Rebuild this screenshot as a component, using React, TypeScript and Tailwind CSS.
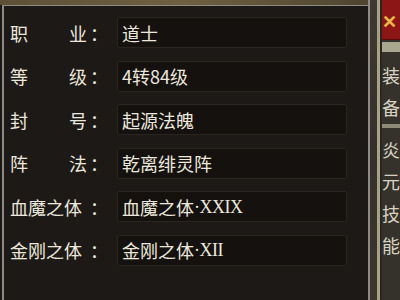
import React from 'react';

const rows = [
  { label: ['职', '业'], value: '道士', suffix: '' },
  { label: ['等', '级'], value: '4转84级', suffix: '' },
  { label: ['封', '号'], value: '起源法魄', suffix: '' },
  { label: ['阵', '法'], value: '乾离绯灵阵', suffix: '' },
  { label: ['血魔之体'], value: '血魔之体', suffix: '·XXIX' },
  { label: ['金刚之体'], value: '金刚之体', suffix: '·XII' },
];

export default function App() {
  return (
    <div
      className="flex w-[400px] h-[300px] overflow-hidden bg-[#1e1a16] text-[#ece7dd]"
      style={{ fontFamily: '"Noto Sans CJK SC", "Noto Sans", sans-serif' }}
    >
      {/* Left info panel */}
      <div className="flex flex-col w-[368px] shrink-0 bg-[#1c1815]">
        {/* Top textured strip */}
        <div className="h-[5px] bg-gradient-to-r from-[#5e5036] via-[#6e6040] to-[#4f4530]" />
        <div className="flex-1 ml-[2px] border-l-2 border-t-[1.5px] border-[#8f8b84] bg-[#1d1916] pl-[6px] pt-[11px]">
          <div className="flex flex-col gap-[12.5px]">
            {rows.map((row, i) => (
              <div key={i} className="flex items-center h-[31px]">
                <div className="w-[77px] flex justify-between text-[18px] leading-none">
                  {row.label.map((c, j) => (
                    <span key={j}>{c}</span>
                  ))}
                </div>
                <span className="ml-[3px] w-[18px] text-[18px] leading-none">：</span>
                <div className="ml-[9px] w-[230px] h-[31px] flex items-center pl-[4px] bg-[#14110e] border border-[#2b2520] rounded-[2px] text-[18px] leading-none">
                  {row.value}
                  {row.suffix && (
                    <span className="font-['Liberation_Serif',serif] text-[18px] tracking-[-0.5px]">
                      {row.suffix}
                    </span>
                  )}
                </div>
              </div>
            ))}
          </div>
        </div>
      </div>

      {/* Right frame edge */}
      <div className="w-[3px] bg-[#8f8b84]" />
      <div className="w-[10px] bg-gradient-to-b from-[#3c3832] via-[#34302b] to-[#3a362f]" />
      <div className="w-[5px] bg-[#a9a184]" />
      <div className="w-[3px] bg-[#2a2723]" />

      {/* Neighbouring panel sliver */}
      <div className="flex-1 flex flex-col bg-[#35322c]">
        <div className="h-[40px] bg-[#8c1616] border-b border-[#5a0e0e] flex items-center text-[#e8b84a] text-[18px] font-bold leading-none">
          ✕
        </div>
        <div className="h-[10px] mt-[2px] bg-[#a9a790]" />
        <div className="flex flex-col gap-[14px] pt-[14px] text-[18px] leading-none text-[#d8d2c2]">
          <span>装</span>
          <span>备</span>
        </div>
        <div className="h-[4px] mt-[8px] bg-[#8f8a78]" />
        <div className="flex flex-col gap-[14px] pt-[12px] text-[18px] leading-none text-[#d8d2c2]">
          <span>炎</span>
          <span>元</span>
          <span>技</span>
          <span>能</span>
        </div>
      </div>
    </div>
  );
}
